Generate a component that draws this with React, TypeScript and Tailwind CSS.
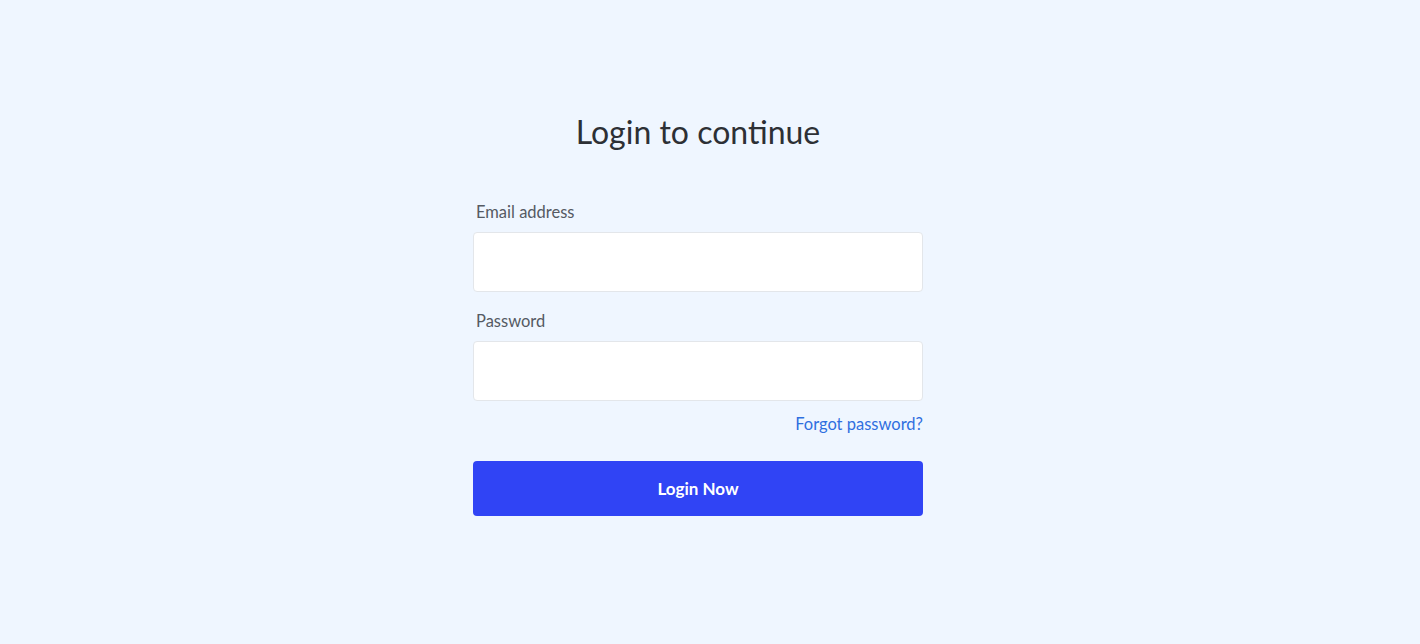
export default function App() {
  return (
    <div className="min-h-screen w-full bg-[#eff6ff] font-['Lato',sans-serif] flex flex-col items-center pt-[113px] pr-[24px]">
      <h1 className="text-[32px] leading-[38px] text-[#2d3035] font-normal">Login to continue</h1>
      <form className="w-[450px] mt-[52px] flex flex-col">
        <label className="text-[16.5px] leading-[18px] text-[#555a63] pl-[3px]">Email address</label>
        <input type="email" className="mt-[11px] h-[60px] bg-white border border-[#e3e6ea] rounded-[4px] outline-none px-3" />
        <label className="mt-[20px] text-[16.5px] leading-[18px] text-[#555a63] pl-[3px]">Password</label>
        <input type="password" className="mt-[11px] h-[60px] bg-white border border-[#e3e6ea] rounded-[4px] outline-none px-3" />
        <div className="flex justify-end mt-[14px]">
          <a href="#" className="text-[16.5px] leading-[18px] text-[#2f6fe0]">Forgot password?</a>
        </div>
        <button type="button" className="mt-[28px] h-[55px] rounded-[4px] bg-[#3044f5] text-white font-bold text-[17px]">Login Now</button>
      </form>
    </div>
  );
}
